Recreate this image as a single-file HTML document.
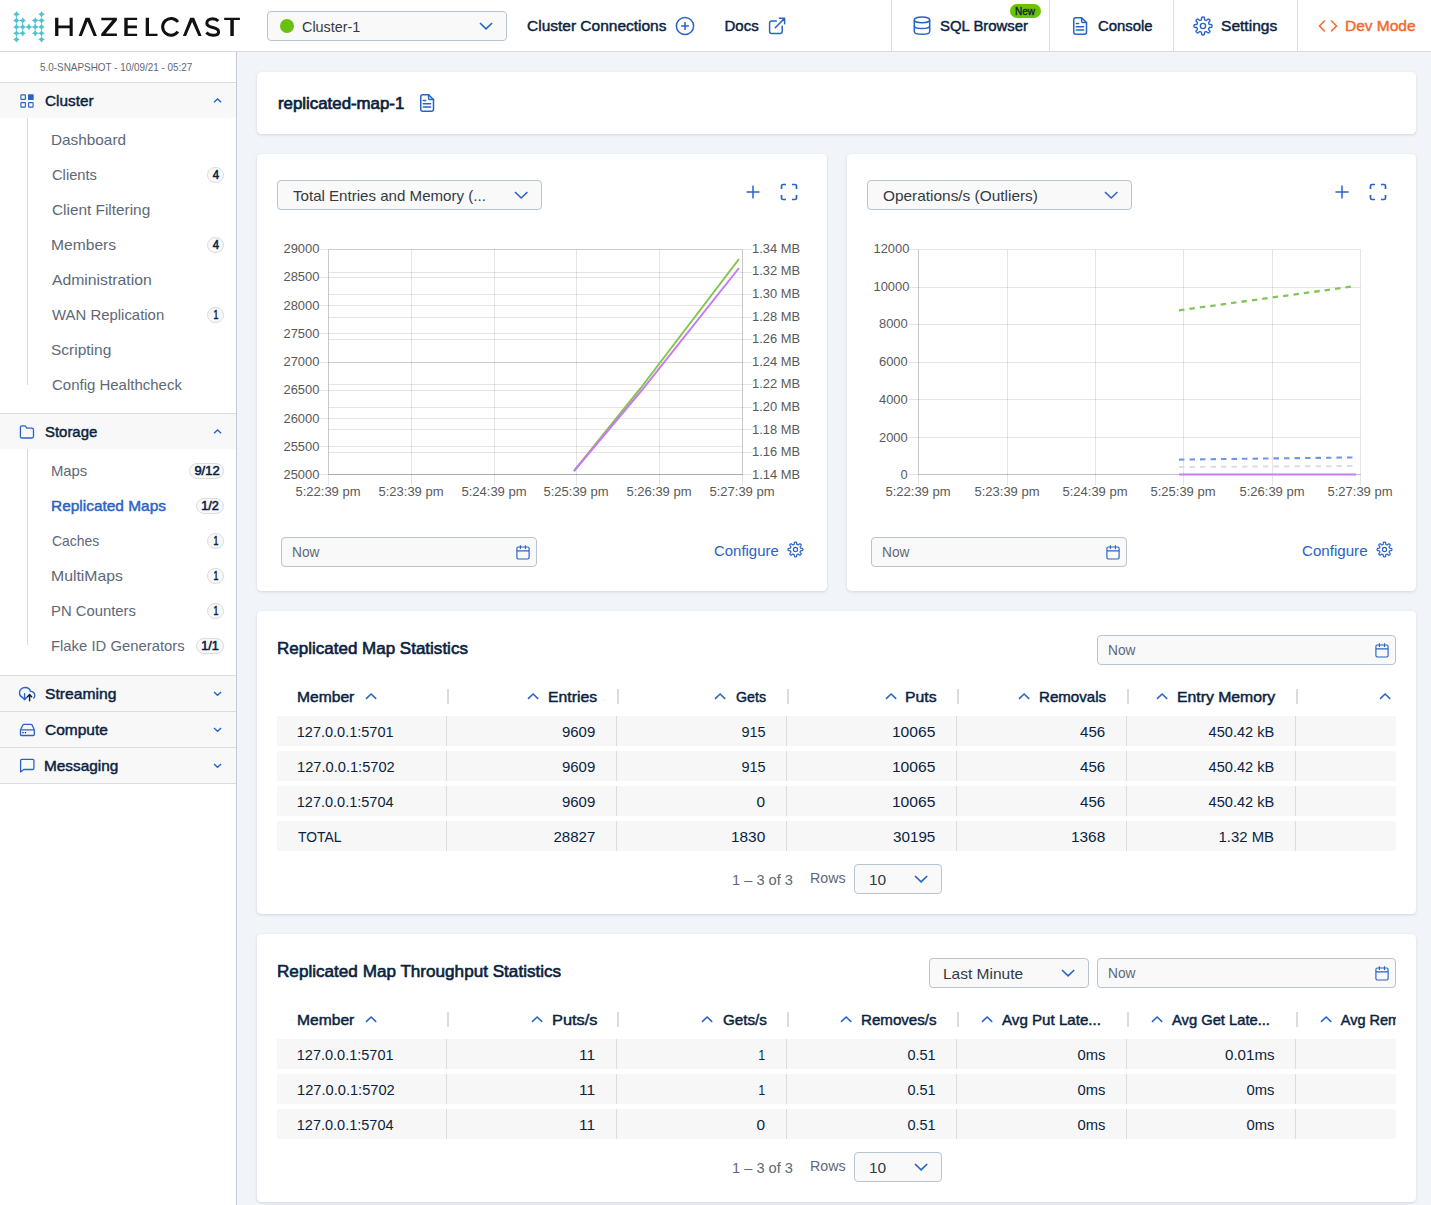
<!DOCTYPE html><html><head><meta charset="utf-8"><style>html,body{margin:0;padding:0;width:1431px;height:1205px;overflow:hidden;background:#fff}.t{position:absolute;white-space:nowrap;font-family:"Liberation Sans",sans-serif}</style></head><body>
<div style="position:absolute;left:0;top:0;width:1431px;height:51px;background:#fff;border-bottom:1px solid #d9d9d9"></div>
<svg style="position:absolute;left:0;top:0" width="250" height="51" viewBox="0 0 250 51"><g stroke="#4fc3cf" stroke-width="0.45" fill="none"><line x1="16.45" y1="14.3" x2="16.45" y2="39.5"/><line x1="41.5" y1="14.3" x2="41.5" y2="39.5"/><line x1="16.45" y1="20.6" x2="22.7" y2="20.6"/><line x1="35.2" y1="20.6" x2="41.5" y2="20.6"/><line x1="16.45" y1="26.9" x2="22.7" y2="26.9"/><line x1="35.2" y1="26.9" x2="41.5" y2="26.9"/><line x1="16.45" y1="33.2" x2="22.7" y2="33.2"/><line x1="35.2" y1="33.2" x2="41.5" y2="33.2"/><line x1="22.7" y1="20.6" x2="22.7" y2="33.2"/><line x1="35.2" y1="20.6" x2="35.2" y2="33.2"/><line x1="22.7" y1="26.9" x2="35.2" y2="26.9"/></g><g fill="#4fc3cf"><path d="M16.45,11.0 Q17.2,13.55 19.75,14.3 Q17.2,15.05 16.45,17.6 Q15.7,15.05 13.149999999999999,14.3 Q15.7,13.55 16.45,11.0Z"/><path d="M41.5,11.0 Q42.25,13.55 44.8,14.3 Q42.25,15.05 41.5,17.6 Q40.75,15.05 38.2,14.3 Q40.75,13.55 41.5,11.0Z"/><path d="M16.45,17.3 Q17.2,19.85 19.75,20.6 Q17.2,21.35 16.45,23.900000000000002 Q15.7,21.35 13.149999999999999,20.6 Q15.7,19.85 16.45,17.3Z"/><path d="M22.7,17.3 Q23.45,19.85 26.0,20.6 Q23.45,21.35 22.7,23.900000000000002 Q21.95,21.35 19.4,20.6 Q21.95,19.85 22.7,17.3Z"/><path d="M35.2,17.3 Q35.95,19.85 38.5,20.6 Q35.95,21.35 35.2,23.900000000000002 Q34.45,21.35 31.900000000000002,20.6 Q34.45,19.85 35.2,17.3Z"/><path d="M41.5,17.3 Q42.25,19.85 44.8,20.6 Q42.25,21.35 41.5,23.900000000000002 Q40.75,21.35 38.2,20.6 Q40.75,19.85 41.5,17.3Z"/><path d="M16.45,23.599999999999998 Q17.2,26.15 19.75,26.9 Q17.2,27.65 16.45,30.2 Q15.7,27.65 13.149999999999999,26.9 Q15.7,26.15 16.45,23.599999999999998Z"/><path d="M22.7,23.599999999999998 Q23.45,26.15 26.0,26.9 Q23.45,27.65 22.7,30.2 Q21.95,27.65 19.4,26.9 Q21.95,26.15 22.7,23.599999999999998Z"/><path d="M28.9,23.599999999999998 Q29.65,26.15 32.199999999999996,26.9 Q29.65,27.65 28.9,30.2 Q28.15,27.65 25.599999999999998,26.9 Q28.15,26.15 28.9,23.599999999999998Z"/><path d="M35.2,23.599999999999998 Q35.95,26.15 38.5,26.9 Q35.95,27.65 35.2,30.2 Q34.45,27.65 31.900000000000002,26.9 Q34.45,26.15 35.2,23.599999999999998Z"/><path d="M41.5,23.599999999999998 Q42.25,26.15 44.8,26.9 Q42.25,27.65 41.5,30.2 Q40.75,27.65 38.2,26.9 Q40.75,26.15 41.5,23.599999999999998Z"/><path d="M16.45,29.900000000000002 Q17.2,32.45 19.75,33.2 Q17.2,33.95 16.45,36.5 Q15.7,33.95 13.149999999999999,33.2 Q15.7,32.45 16.45,29.900000000000002Z"/><path d="M22.7,29.900000000000002 Q23.45,32.45 26.0,33.2 Q23.45,33.95 22.7,36.5 Q21.95,33.95 19.4,33.2 Q21.95,32.45 22.7,29.900000000000002Z"/><path d="M35.2,29.900000000000002 Q35.95,32.45 38.5,33.2 Q35.95,33.95 35.2,36.5 Q34.45,33.95 31.900000000000002,33.2 Q34.45,32.45 35.2,29.900000000000002Z"/><path d="M41.5,29.900000000000002 Q42.25,32.45 44.8,33.2 Q42.25,33.95 41.5,36.5 Q40.75,33.95 38.2,33.2 Q40.75,32.45 41.5,29.900000000000002Z"/><path d="M16.45,36.2 Q17.2,38.75 19.75,39.5 Q17.2,40.25 16.45,42.8 Q15.7,40.25 13.149999999999999,39.5 Q15.7,38.75 16.45,36.2Z"/><path d="M41.5,36.2 Q42.25,38.75 44.8,39.5 Q42.25,40.25 41.5,42.8 Q40.75,40.25 38.2,39.5 Q40.75,38.75 41.5,36.2Z"/></g><g fill="#111"><path d="M55.1,17.8 H58.4 V25.5 H69.6 V17.8 H72.7 V36.0 H69.6 V28.3 H58.4 V36.0 H55.1 Z"/><path d="M78.6,36.0 L85.6,17.8 H89.6 L96.9,36.0 H93.7 L87.6,21.6 L81.8,36.0 Z"/><path d="M101.3,17.8 H116.9 V20.2 L105.7,33.6 H116.9 V36.0 H101.2 V33.7 L112.4,20.2 H101.3 Z"/><path d="M124.3,17.8 H137.1 V20.1 H127.7 V25.6 H136.9 V28.2 H127.7 V33.7 H137.1 V36.0 H124.3 Z"/><path d="M145.7,17.8 H149.0 V33.7 H157.5 V36.0 H145.7 Z"/><path d="M182.9,36.0 L190.2,17.8 H194.1 L201.6,36.0 H198.4 L192.1,21.8 L186.1,36.0 Z"/><path d="M224.2,17.8 H239.9 V20.1 H233.8 V36.0 H230.3 V20.1 H224.2 Z"/></g><g stroke="#111" stroke-width="3.0" fill="none"><path d="M177.9,22.0 A8.4,8.4 0 1 0 177.9,31.7"/><path d="M218.3,21.0 C216.8,19.5 214.8,18.8 212.6,18.8 C209.3,18.8 206.8,20.6 206.8,23.2 C206.8,26.0 209.6,26.8 212.8,27.5 C216.3,28.2 218.6,29.4 218.6,31.9 C218.6,34.0 216.2,35.3 212.8,35.3 C210.3,35.3 208.0,34.2 206.3,32.6"/></g></svg>
<div style="position:absolute;left:267px;top:11px;width:238px;height:28px;border:1px solid #b8c3d0;border-radius:4px;background:#f9f9f9"></div>
<div style="position:absolute;left:280px;top:19px;width:14px;height:14px;border-radius:50%;background:#66c20e"></div>
<svg style="position:absolute;left:478px;top:20.9px" width="16.1" height="9.8"><path d="M2,2 L8.05,7.8 L14.1,2" fill="none" stroke="#2863c8" stroke-width="1.6"/></svg>
<svg style="position:absolute;left:674px;top:15px" width="22" height="22"><circle cx="11" cy="11" r="8.6" fill="none" stroke="#2863c8" stroke-width="1.5"/><path d="M11,7.1 V14.9 M7.1,11 H14.9" stroke="#2863c8" stroke-width="1.5"/></svg>
<svg style="position:absolute;left:767px;top:16px" width="21" height="20"><path d="M9.4,4.9 H4.6 Q2.6,4.9 2.6,6.9 V15.4 Q2.6,17.4 4.6,17.4 H13.2 Q15.2,17.4 15.2,15.4 V10.3" fill="none" stroke="#2863c8" stroke-width="1.5" stroke-linecap="round"/><path d="M8.3,11.7 L17.5,2.4 M12.3,2.3 H17.6 V7.7" fill="none" stroke="#2863c8" stroke-width="1.5" stroke-linecap="round" stroke-linejoin="round"/></svg>
<div style="position:absolute;left:891px;top:0;width:1px;height:51px;background:#dedede"></div>
<div style="position:absolute;left:1049px;top:0;width:1px;height:51px;background:#dedede"></div>
<div style="position:absolute;left:1173px;top:0;width:1px;height:51px;background:#dedede"></div>
<div style="position:absolute;left:1297px;top:0;width:1px;height:51px;background:#dedede"></div>
<svg style="position:absolute;left:912px;top:16px" width="20" height="20"><g fill="none" stroke="#2863c8" stroke-width="1.5"><ellipse cx="10" cy="3.9" rx="7.7" ry="2.8"/><path d="M2.3,3.9 V15.5 C2.3,17.2 5.7,18.3 10,18.3 C14.3,18.3 17.7,17.2 17.7,15.5 V3.9"/><path d="M2.3,9.8 C2.3,11.5 5.7,12.6 10,12.6 C14.3,12.6 17.7,11.5 17.7,9.8"/></g></svg>
<div style="position:absolute;left:1010px;top:4px;width:31px;height:13.8px;border-radius:7px;background:#6bc403"></div>
<svg style="position:absolute;left:1073px;top:17px;overflow:visible" width="15" height="18"><g fill="none" stroke="#2863c8" stroke-width="1.5" stroke-linecap="round" stroke-linejoin="round"><path d="M8.6,0.75 H2.75 Q0.75,0.75 0.75,2.75 V15.2 Q0.75,17.2 2.75,17.2 H11.5 Q13.5,17.2 13.5,15.2 V5.6 Z"/><path d="M8.6,0.75 V4.6 Q8.6,5.6 9.6,5.6 H13.5"/><path d="M3.3,6.5 H5.6 M3.3,9.8 H10.6 M3.3,13.1 H10.6"/></g></svg>
<svg style="position:absolute;left:1193px;top:16px" width="20" height="20"><path d="M10.00,1.01 L10.24,1.02 L10.47,1.04 L10.70,1.07 L10.93,1.14 L11.15,1.28 L11.33,1.63 L11.43,2.28 L11.48,3.05 L11.55,3.55 L11.66,3.79 L11.80,3.91 L11.95,3.99 L12.11,4.05 L12.26,4.11 L12.41,4.17 L12.57,4.24 L12.72,4.30 L12.87,4.37 L13.03,4.42 L13.21,4.44 L13.46,4.35 L13.87,4.04 L14.45,3.53 L14.98,3.14 L15.35,3.03 L15.61,3.07 L15.82,3.19 L16.01,3.33 L16.18,3.48 L16.35,3.65 L16.52,3.82 L16.67,3.99 L16.81,4.18 L16.93,4.39 L16.97,4.65 L16.86,5.02 L16.47,5.55 L15.96,6.13 L15.65,6.54 L15.56,6.79 L15.58,6.97 L15.63,7.13 L15.70,7.28 L15.76,7.43 L15.83,7.59 L15.89,7.74 L15.95,7.89 L16.01,8.05 L16.09,8.20 L16.21,8.34 L16.45,8.45 L16.95,8.52 L17.72,8.57 L18.37,8.67 L18.72,8.85 L18.86,9.07 L18.93,9.30 L18.96,9.53 L18.98,9.76 L18.99,10.00 L18.98,10.24 L18.96,10.47 L18.93,10.70 L18.86,10.93 L18.72,11.15 L18.37,11.33 L17.72,11.43 L16.95,11.48 L16.45,11.55 L16.21,11.66 L16.09,11.80 L16.01,11.95 L15.95,12.11 L15.89,12.26 L15.83,12.41 L15.76,12.57 L15.70,12.72 L15.63,12.87 L15.58,13.03 L15.56,13.21 L15.65,13.46 L15.96,13.87 L16.47,14.45 L16.86,14.98 L16.97,15.35 L16.93,15.61 L16.81,15.82 L16.67,16.01 L16.52,16.18 L16.35,16.35 L16.18,16.52 L16.01,16.67 L15.82,16.81 L15.61,16.93 L15.35,16.97 L14.98,16.86 L14.45,16.47 L13.87,15.96 L13.46,15.65 L13.21,15.56 L13.03,15.58 L12.87,15.63 L12.72,15.70 L12.57,15.76 L12.41,15.83 L12.26,15.89 L12.11,15.95 L11.95,16.01 L11.80,16.09 L11.66,16.21 L11.55,16.45 L11.48,16.95 L11.43,17.72 L11.33,18.37 L11.15,18.72 L10.93,18.86 L10.70,18.93 L10.47,18.96 L10.24,18.98 L10.00,18.99 L9.76,18.98 L9.53,18.96 L9.30,18.93 L9.07,18.86 L8.85,18.72 L8.67,18.37 L8.57,17.72 L8.52,16.95 L8.45,16.45 L8.34,16.21 L8.20,16.09 L8.05,16.01 L7.89,15.95 L7.74,15.89 L7.59,15.83 L7.43,15.76 L7.28,15.70 L7.13,15.63 L6.97,15.58 L6.79,15.56 L6.54,15.65 L6.13,15.96 L5.55,16.47 L5.02,16.86 L4.65,16.97 L4.39,16.93 L4.18,16.81 L3.99,16.67 L3.82,16.52 L3.65,16.35 L3.48,16.18 L3.33,16.01 L3.19,15.82 L3.07,15.61 L3.03,15.35 L3.14,14.98 L3.53,14.45 L4.04,13.87 L4.35,13.46 L4.44,13.21 L4.42,13.03 L4.37,12.87 L4.30,12.72 L4.24,12.57 L4.17,12.41 L4.11,12.26 L4.05,12.11 L3.99,11.95 L3.91,11.80 L3.79,11.66 L3.55,11.55 L3.05,11.48 L2.28,11.43 L1.63,11.33 L1.28,11.15 L1.14,10.93 L1.07,10.70 L1.04,10.47 L1.02,10.24 L1.01,10.00 L1.02,9.76 L1.04,9.53 L1.07,9.30 L1.14,9.07 L1.28,8.85 L1.63,8.67 L2.28,8.57 L3.05,8.52 L3.55,8.45 L3.79,8.34 L3.91,8.20 L3.99,8.05 L4.05,7.89 L4.11,7.74 L4.17,7.59 L4.24,7.43 L4.30,7.28 L4.37,7.13 L4.42,6.97 L4.44,6.79 L4.35,6.54 L4.04,6.13 L3.53,5.55 L3.14,5.02 L3.03,4.65 L3.07,4.39 L3.19,4.18 L3.33,3.99 L3.48,3.82 L3.65,3.65 L3.82,3.48 L3.99,3.33 L4.18,3.19 L4.39,3.07 L4.65,3.03 L5.02,3.14 L5.55,3.53 L6.13,4.04 L6.54,4.35 L6.79,4.44 L6.97,4.42 L7.13,4.37 L7.28,4.30 L7.43,4.24 L7.59,4.17 L7.74,4.11 L7.89,4.05 L8.05,3.99 L8.20,3.91 L8.34,3.79 L8.45,3.55 L8.52,3.05 L8.57,2.28 L8.67,1.63 L8.85,1.28 L9.07,1.14 L9.30,1.07 L9.53,1.04 L9.76,1.02Z" fill="none" stroke="#2863c8" stroke-width="1.4" stroke-linejoin="round"/><circle cx="10.0" cy="10.0" r="2.6" fill="none" stroke="#2863c8" stroke-width="1.4"/></svg>
<svg style="position:absolute;left:1317px;top:17px" width="22" height="18"><path d="M7.8,3.5 L2.4,9 L7.8,14.4 M14.1,3.5 L19.5,9 L14.1,14.4" fill="none" stroke="#f26d2c" stroke-width="1.5"/></svg>
<div style="position:absolute;left:0;top:52px;width:236px;height:1153px;background:#fff;border-right:1px solid #c3cad4"></div>
<div style="position:absolute;left:0;top:82px;width:236px;height:1px;background:#dcdcdc"></div>
<div style="position:absolute;left:0;top:83px;width:236px;height:35px;background:#f8f8f8"></div>
<svg style="position:absolute;left:19px;top:93px" width="16" height="16"><g fill="none" stroke="#2863c8" stroke-width="1.15"><rect x="1.9" y="1.9" width="4.5" height="4.5" rx="0.6"/><rect x="1.9" y="9.6" width="4.5" height="4.5" rx="0.6"/><rect x="9.6" y="9.6" width="4.5" height="4.5" rx="0.6"/></g><rect x="9.0" y="1.3" width="5.7" height="5.7" rx="0.6" fill="#2863c8"/></svg>
<svg style="position:absolute;left:212.4px;top:97.3px" width="11.1" height="7.3"><path d="M2,5.3 L5.55,2 L9.1,5.3" fill="none" stroke="#2863c8" stroke-width="1.4"/></svg>
<div style="position:absolute;left:0;top:413px;width:236px;height:1px;background:#dcdcdc"></div>
<div style="position:absolute;left:0;top:414px;width:236px;height:35px;background:#f8f8f8"></div>
<svg style="position:absolute;left:19px;top:424px" width="17" height="16"><path d="M1.4,3.6 Q1.4,1.9 3.1,1.9 H5.6 Q6.4,1.9 6.8,2.6 L7.5,3.6 Q7.9,4.2 8.6,4.2 H12.8 Q14.5,4.2 14.5,5.9 V12.3 Q14.5,14.0 12.8,14.0 H3.1 Q1.4,14.0 1.4,12.3 Z" fill="none" stroke="#2863c8" stroke-width="1.3"/></svg>
<svg style="position:absolute;left:212.4px;top:428.3px" width="11.1" height="7.3"><path d="M2,5.3 L5.55,2 L9.1,5.3" fill="none" stroke="#2863c8" stroke-width="1.4"/></svg>
<div style="position:absolute;left:0;top:675px;width:236px;height:1px;background:#dcdcdc"></div>
<div style="position:absolute;left:0;top:676px;width:236px;height:35px;background:#f8f8f8"></div>
<svg style="position:absolute;left:18px;top:685px" width="19" height="18"><path d="M4.4,12.4 C2.6,11.6 1.5,9.9 1.5,7.9 C1.5,4.8 4,2.5 7.2,2.5 C9.6,2.5 11.7,4 12.5,6.2 C14.9,6.3 16.8,8.2 16.8,10.5 C16.8,11.5 16.4,12.4 15.7,13.1" fill="none" stroke="#2863c8" stroke-width="1.4" stroke-linecap="round"/><path d="M6.6,8.6 V14.8 M4.5,12.6 L6.6,14.8 L8.7,12.6" fill="none" stroke="#2863c8" stroke-width="1.4" stroke-linecap="round" stroke-linejoin="round"/><path d="M11.6,15.8 V9.6 M9.5,11.8 L11.6,9.6 L13.7,11.8" fill="none" stroke="#0b1f3f" stroke-width="1.4" stroke-linecap="round" stroke-linejoin="round"/></svg>
<svg style="position:absolute;left:212.4px;top:690.4px" width="11.1" height="7.3"><path d="M2,2 L5.55,5.3 L9.1,2" fill="none" stroke="#2863c8" stroke-width="1.4"/></svg>
<div style="position:absolute;left:0;top:711px;width:236px;height:1px;background:#dcdcdc"></div>
<div style="position:absolute;left:0;top:712px;width:236px;height:35px;background:#f8f8f8"></div>
<svg style="position:absolute;left:19px;top:722px" width="17" height="16"><path d="M1.5,8 L3.7,3.3 Q4.2,2.4 5.2,2.4 H11.8 Q12.8,2.4 13.3,3.3 L15.3,8 V12.4 Q15.3,13.5 14.2,13.5 H2.6 Q1.5,13.5 1.5,12.4 Z M1.5,7.9 H15.3" fill="none" stroke="#2863c8" stroke-width="1.3" stroke-linejoin="round"/><path d="M3.3,10.6 H4.6 M5.8,10.6 H7.1" stroke="#0b1f3f" stroke-width="1.1"/></svg>
<svg style="position:absolute;left:212.4px;top:726.4px" width="11.1" height="7.3"><path d="M2,2 L5.55,5.3 L9.1,2" fill="none" stroke="#2863c8" stroke-width="1.4"/></svg>
<div style="position:absolute;left:0;top:747px;width:236px;height:1px;background:#dcdcdc"></div>
<div style="position:absolute;left:0;top:748px;width:236px;height:35px;background:#f8f8f8"></div>
<svg style="position:absolute;left:19px;top:758px" width="17" height="16"><path d="M4.8,11.5 H13.6 Q14.9,11.5 14.9,10.2 V2.6 Q14.9,1.3 13.6,1.3 H2.9 Q1.6,1.3 1.6,2.6 V13.9 Z" fill="none" stroke="#2863c8" stroke-width="1.3" stroke-linejoin="round"/></svg>
<svg style="position:absolute;left:212.4px;top:762.4px" width="11.1" height="7.3"><path d="M2,2 L5.55,5.3 L9.1,2" fill="none" stroke="#2863c8" stroke-width="1.4"/></svg>
<div style="position:absolute;left:0;top:783px;width:236px;height:1px;background:#dcdcdc"></div>
<div style="position:absolute;left:27px;top:118px;width:1px;height:267px;background:#d9d9d9"></div>
<div style="position:absolute;left:27px;top:449px;width:1px;height:196px;background:#d9d9d9"></div>
<div style="position:absolute;left:207px;top:167.0px;width:15px;height:14px;border:1px solid #dddddd;border-radius:9px;background:#f8f8f8"></div>
<div style="position:absolute;left:207px;top:237.0px;width:15px;height:14px;border:1px solid #dddddd;border-radius:9px;background:#f8f8f8"></div>
<div style="position:absolute;left:207px;top:307.0px;width:15px;height:14px;border:1px solid #dddddd;border-radius:9px;background:#f8f8f8"></div>
<div style="position:absolute;left:189px;top:463.0px;width:33px;height:14px;border:1px solid #dddddd;border-radius:9px;background:#f8f8f8"></div>
<div style="position:absolute;left:196px;top:498.0px;width:26px;height:14px;border:1px solid #dddddd;border-radius:9px;background:#f8f8f8"></div>
<div style="position:absolute;left:207px;top:533.0px;width:15px;height:14px;border:1px solid #dddddd;border-radius:9px;background:#f8f8f8"></div>
<div style="position:absolute;left:207px;top:568.0px;width:15px;height:14px;border:1px solid #dddddd;border-radius:9px;background:#f8f8f8"></div>
<div style="position:absolute;left:207px;top:603.0px;width:15px;height:14px;border:1px solid #dddddd;border-radius:9px;background:#f8f8f8"></div>
<div style="position:absolute;left:196px;top:638.0px;width:26px;height:14px;border:1px solid #dddddd;border-radius:9px;background:#f8f8f8"></div>
<div style="position:absolute;left:237px;top:52px;width:1194px;height:1153px;background:#f1f4f8"></div>
<div style="position:absolute;left:257px;top:72px;width:1159px;height:62px;background:#fff;border-radius:4.5px;box-shadow:0 1px 3px rgba(40,50,80,0.15)"></div>
<svg style="position:absolute;left:420px;top:94px;overflow:visible" width="15" height="18"><g fill="none" stroke="#2863c8" stroke-width="1.5" stroke-linecap="round" stroke-linejoin="round"><path d="M8.6,0.75 H2.75 Q0.75,0.75 0.75,2.75 V15.2 Q0.75,17.2 2.75,17.2 H11.5 Q13.5,17.2 13.5,15.2 V5.6 Z"/><path d="M8.6,0.75 V4.6 Q8.6,5.6 9.6,5.6 H13.5"/><path d="M3.3,6.5 H5.6 M3.3,9.8 H10.6 M3.3,13.1 H10.6"/></g></svg>
<div style="position:absolute;left:257px;top:154px;width:570px;height:437px;background:#fff;border-radius:4.5px;box-shadow:0 1px 3px rgba(40,50,80,0.15)"></div>
<div style="position:absolute;left:847px;top:154px;width:569px;height:437px;background:#fff;border-radius:4.5px;box-shadow:0 1px 3px rgba(40,50,80,0.15)"></div>
<div style="position:absolute;left:257px;top:611px;width:1159px;height:303px;background:#fff;border-radius:4.5px;box-shadow:0 1px 3px rgba(40,50,80,0.15)"></div>
<div style="position:absolute;left:257px;top:934px;width:1159px;height:268px;background:#fff;border-radius:4.5px;box-shadow:0 1px 3px rgba(40,50,80,0.15)"></div>
<div style="position:absolute;left:277px;top:180px;width:263px;height:28px;border:1px solid #b8c3d0;border-radius:4px;background:#f9f9f9"></div>
<svg style="position:absolute;left:512.8px;top:189.9px" width="16.4" height="10.0"><path d="M2,2 L8.2,8.0 L14.4,2" fill="none" stroke="#2863c8" stroke-width="1.6"/></svg>
<svg style="position:absolute;left:745px;top:184px" width="16" height="16"><path d="M8,1.5 V14.5 M1.5,8 H14.5" stroke="#2863c8" stroke-width="1.5"/></svg>
<svg style="position:absolute;left:780px;top:183px" width="18" height="18"><path d="M1.5,6 V3 Q1.5,1.5 3,1.5 H6 M12,1.5 H15 Q16.5,1.5 16.5,3 V6 M16.5,12 V15 Q16.5,16.5 15,16.5 H12 M6,16.5 H3 Q1.5,16.5 1.5,15 V12" fill="none" stroke="#2863c8" stroke-width="1.7"/></svg>
<div style="position:absolute;left:867px;top:180px;width:263px;height:28px;border:1px solid #b8c3d0;border-radius:4px;background:#f9f9f9"></div>
<svg style="position:absolute;left:1102.8px;top:189.9px" width="16.4" height="10.0"><path d="M2,2 L8.2,8.0 L14.4,2" fill="none" stroke="#2863c8" stroke-width="1.6"/></svg>
<svg style="position:absolute;left:1334px;top:184px" width="16" height="16"><path d="M8,1.5 V14.5 M1.5,8 H14.5" stroke="#2863c8" stroke-width="1.5"/></svg>
<svg style="position:absolute;left:1369px;top:183px" width="18" height="18"><path d="M1.5,6 V3 Q1.5,1.5 3,1.5 H6 M12,1.5 H15 Q16.5,1.5 16.5,3 V6 M16.5,12 V15 Q16.5,16.5 15,16.5 H12 M6,16.5 H3 Q1.5,16.5 1.5,15 V12" fill="none" stroke="#2863c8" stroke-width="1.7"/></svg>
<div style="position:absolute;left:281px;top:537px;width:254px;height:28px;border:1px solid #b8c3d0;border-radius:4px;background:#f9f9f9"></div>
<svg style="position:absolute;left:516px;top:544.5px" width="15" height="15"><g fill="none" stroke="#2863c8" stroke-width="1.15"><rect x="0.9" y="2.0" width="12.2" height="12.0" rx="1.4"/><path d="M0.9,5.9 H13.1 M4.4,0.2 V4.0 M9.5,0.2 V4.0"/></g></svg>
<div style="position:absolute;left:871px;top:537px;width:254px;height:28px;border:1px solid #b8c3d0;border-radius:4px;background:#f9f9f9"></div>
<svg style="position:absolute;left:1106px;top:544.5px" width="15" height="15"><g fill="none" stroke="#2863c8" stroke-width="1.15"><rect x="0.9" y="2.0" width="12.2" height="12.0" rx="1.4"/><path d="M0.9,5.9 H13.1 M4.4,0.2 V4.0 M9.5,0.2 V4.0"/></g></svg>
<svg style="position:absolute;left:786.75px;top:541.25px" width="17" height="17"><path d="M8.50,1.11 L8.69,1.12 L8.89,1.13 L9.08,1.16 L9.27,1.21 L9.44,1.33 L9.59,1.61 L9.68,2.14 L9.72,2.77 L9.78,3.18 L9.87,3.38 L9.99,3.47 L10.11,3.54 L10.24,3.59 L10.37,3.64 L10.49,3.69 L10.62,3.74 L10.74,3.80 L10.87,3.85 L11.00,3.89 L11.15,3.91 L11.36,3.84 L11.69,3.59 L12.16,3.17 L12.60,2.86 L12.90,2.76 L13.11,2.80 L13.28,2.90 L13.44,3.01 L13.58,3.14 L13.72,3.28 L13.86,3.42 L13.99,3.56 L14.10,3.72 L14.20,3.89 L14.24,4.10 L14.14,4.40 L13.83,4.84 L13.41,5.31 L13.16,5.64 L13.09,5.85 L13.11,6.00 L13.15,6.13 L13.20,6.26 L13.26,6.38 L13.31,6.51 L13.36,6.63 L13.41,6.76 L13.46,6.89 L13.53,7.01 L13.62,7.13 L13.82,7.22 L14.23,7.28 L14.86,7.32 L15.39,7.41 L15.67,7.56 L15.79,7.73 L15.84,7.92 L15.87,8.11 L15.88,8.31 L15.89,8.50 L15.88,8.69 L15.87,8.89 L15.84,9.08 L15.79,9.27 L15.67,9.44 L15.39,9.59 L14.86,9.68 L14.23,9.72 L13.82,9.78 L13.62,9.87 L13.53,9.99 L13.46,10.11 L13.41,10.24 L13.36,10.37 L13.31,10.49 L13.26,10.62 L13.20,10.74 L13.15,10.87 L13.11,11.00 L13.09,11.15 L13.16,11.36 L13.41,11.69 L13.83,12.16 L14.14,12.60 L14.24,12.90 L14.20,13.11 L14.10,13.28 L13.99,13.44 L13.86,13.58 L13.72,13.72 L13.58,13.86 L13.44,13.99 L13.28,14.10 L13.11,14.20 L12.90,14.24 L12.60,14.14 L12.16,13.83 L11.69,13.41 L11.36,13.16 L11.15,13.09 L11.00,13.11 L10.87,13.15 L10.74,13.20 L10.62,13.26 L10.49,13.31 L10.37,13.36 L10.24,13.41 L10.11,13.46 L9.99,13.53 L9.87,13.62 L9.78,13.82 L9.72,14.23 L9.68,14.86 L9.59,15.39 L9.44,15.67 L9.27,15.79 L9.08,15.84 L8.89,15.87 L8.69,15.88 L8.50,15.89 L8.31,15.88 L8.11,15.87 L7.92,15.84 L7.73,15.79 L7.56,15.67 L7.41,15.39 L7.32,14.86 L7.28,14.23 L7.22,13.82 L7.13,13.62 L7.01,13.53 L6.89,13.46 L6.76,13.41 L6.63,13.36 L6.51,13.31 L6.38,13.26 L6.26,13.20 L6.13,13.15 L6.00,13.11 L5.85,13.09 L5.64,13.16 L5.31,13.41 L4.84,13.83 L4.40,14.14 L4.10,14.24 L3.89,14.20 L3.72,14.10 L3.56,13.99 L3.42,13.86 L3.28,13.72 L3.14,13.58 L3.01,13.44 L2.90,13.28 L2.80,13.11 L2.76,12.90 L2.86,12.60 L3.17,12.16 L3.59,11.69 L3.84,11.36 L3.91,11.15 L3.89,11.00 L3.85,10.87 L3.80,10.74 L3.74,10.62 L3.69,10.49 L3.64,10.37 L3.59,10.24 L3.54,10.11 L3.47,9.99 L3.38,9.87 L3.18,9.78 L2.77,9.72 L2.14,9.68 L1.61,9.59 L1.33,9.44 L1.21,9.27 L1.16,9.08 L1.13,8.89 L1.12,8.69 L1.11,8.50 L1.12,8.31 L1.13,8.11 L1.16,7.92 L1.21,7.73 L1.33,7.56 L1.61,7.41 L2.14,7.32 L2.77,7.28 L3.18,7.22 L3.38,7.13 L3.47,7.01 L3.54,6.89 L3.59,6.76 L3.64,6.63 L3.69,6.51 L3.74,6.38 L3.80,6.26 L3.85,6.13 L3.89,6.00 L3.91,5.85 L3.84,5.64 L3.59,5.31 L3.17,4.84 L2.86,4.40 L2.76,4.10 L2.80,3.89 L2.90,3.72 L3.01,3.56 L3.14,3.42 L3.28,3.28 L3.42,3.14 L3.56,3.01 L3.72,2.90 L3.89,2.80 L4.10,2.76 L4.40,2.86 L4.84,3.17 L5.31,3.59 L5.64,3.84 L5.85,3.91 L6.00,3.89 L6.13,3.85 L6.26,3.80 L6.38,3.74 L6.51,3.69 L6.63,3.64 L6.76,3.59 L6.89,3.54 L7.01,3.47 L7.13,3.38 L7.22,3.18 L7.28,2.77 L7.32,2.14 L7.41,1.61 L7.56,1.33 L7.73,1.21 L7.92,1.16 L8.11,1.13 L8.31,1.12Z" fill="none" stroke="#2863c8" stroke-width="1.2" stroke-linejoin="round"/><circle cx="8.5" cy="8.5" r="2.1" fill="none" stroke="#2863c8" stroke-width="1.2"/></svg>
<svg style="position:absolute;left:1375.75px;top:541.25px" width="17" height="17"><path d="M8.50,1.11 L8.69,1.12 L8.89,1.13 L9.08,1.16 L9.27,1.21 L9.44,1.33 L9.59,1.61 L9.68,2.14 L9.72,2.77 L9.78,3.18 L9.87,3.38 L9.99,3.47 L10.11,3.54 L10.24,3.59 L10.37,3.64 L10.49,3.69 L10.62,3.74 L10.74,3.80 L10.87,3.85 L11.00,3.89 L11.15,3.91 L11.36,3.84 L11.69,3.59 L12.16,3.17 L12.60,2.86 L12.90,2.76 L13.11,2.80 L13.28,2.90 L13.44,3.01 L13.58,3.14 L13.72,3.28 L13.86,3.42 L13.99,3.56 L14.10,3.72 L14.20,3.89 L14.24,4.10 L14.14,4.40 L13.83,4.84 L13.41,5.31 L13.16,5.64 L13.09,5.85 L13.11,6.00 L13.15,6.13 L13.20,6.26 L13.26,6.38 L13.31,6.51 L13.36,6.63 L13.41,6.76 L13.46,6.89 L13.53,7.01 L13.62,7.13 L13.82,7.22 L14.23,7.28 L14.86,7.32 L15.39,7.41 L15.67,7.56 L15.79,7.73 L15.84,7.92 L15.87,8.11 L15.88,8.31 L15.89,8.50 L15.88,8.69 L15.87,8.89 L15.84,9.08 L15.79,9.27 L15.67,9.44 L15.39,9.59 L14.86,9.68 L14.23,9.72 L13.82,9.78 L13.62,9.87 L13.53,9.99 L13.46,10.11 L13.41,10.24 L13.36,10.37 L13.31,10.49 L13.26,10.62 L13.20,10.74 L13.15,10.87 L13.11,11.00 L13.09,11.15 L13.16,11.36 L13.41,11.69 L13.83,12.16 L14.14,12.60 L14.24,12.90 L14.20,13.11 L14.10,13.28 L13.99,13.44 L13.86,13.58 L13.72,13.72 L13.58,13.86 L13.44,13.99 L13.28,14.10 L13.11,14.20 L12.90,14.24 L12.60,14.14 L12.16,13.83 L11.69,13.41 L11.36,13.16 L11.15,13.09 L11.00,13.11 L10.87,13.15 L10.74,13.20 L10.62,13.26 L10.49,13.31 L10.37,13.36 L10.24,13.41 L10.11,13.46 L9.99,13.53 L9.87,13.62 L9.78,13.82 L9.72,14.23 L9.68,14.86 L9.59,15.39 L9.44,15.67 L9.27,15.79 L9.08,15.84 L8.89,15.87 L8.69,15.88 L8.50,15.89 L8.31,15.88 L8.11,15.87 L7.92,15.84 L7.73,15.79 L7.56,15.67 L7.41,15.39 L7.32,14.86 L7.28,14.23 L7.22,13.82 L7.13,13.62 L7.01,13.53 L6.89,13.46 L6.76,13.41 L6.63,13.36 L6.51,13.31 L6.38,13.26 L6.26,13.20 L6.13,13.15 L6.00,13.11 L5.85,13.09 L5.64,13.16 L5.31,13.41 L4.84,13.83 L4.40,14.14 L4.10,14.24 L3.89,14.20 L3.72,14.10 L3.56,13.99 L3.42,13.86 L3.28,13.72 L3.14,13.58 L3.01,13.44 L2.90,13.28 L2.80,13.11 L2.76,12.90 L2.86,12.60 L3.17,12.16 L3.59,11.69 L3.84,11.36 L3.91,11.15 L3.89,11.00 L3.85,10.87 L3.80,10.74 L3.74,10.62 L3.69,10.49 L3.64,10.37 L3.59,10.24 L3.54,10.11 L3.47,9.99 L3.38,9.87 L3.18,9.78 L2.77,9.72 L2.14,9.68 L1.61,9.59 L1.33,9.44 L1.21,9.27 L1.16,9.08 L1.13,8.89 L1.12,8.69 L1.11,8.50 L1.12,8.31 L1.13,8.11 L1.16,7.92 L1.21,7.73 L1.33,7.56 L1.61,7.41 L2.14,7.32 L2.77,7.28 L3.18,7.22 L3.38,7.13 L3.47,7.01 L3.54,6.89 L3.59,6.76 L3.64,6.63 L3.69,6.51 L3.74,6.38 L3.80,6.26 L3.85,6.13 L3.89,6.00 L3.91,5.85 L3.84,5.64 L3.59,5.31 L3.17,4.84 L2.86,4.40 L2.76,4.10 L2.80,3.89 L2.90,3.72 L3.01,3.56 L3.14,3.42 L3.28,3.28 L3.42,3.14 L3.56,3.01 L3.72,2.90 L3.89,2.80 L4.10,2.76 L4.40,2.86 L4.84,3.17 L5.31,3.59 L5.64,3.84 L5.85,3.91 L6.00,3.89 L6.13,3.85 L6.26,3.80 L6.38,3.74 L6.51,3.69 L6.63,3.64 L6.76,3.59 L6.89,3.54 L7.01,3.47 L7.13,3.38 L7.22,3.18 L7.28,2.77 L7.32,2.14 L7.41,1.61 L7.56,1.33 L7.73,1.21 L7.92,1.16 L8.11,1.13 L8.31,1.12Z" fill="none" stroke="#2863c8" stroke-width="1.2" stroke-linejoin="round"/><circle cx="8.5" cy="8.5" r="2.1" fill="none" stroke="#2863c8" stroke-width="1.2"/></svg>
<svg style="position:absolute;left:0;top:0" width="1431" height="1205"><line x1="318.7" y1="249.5" x2="742.4" y2="249.5" stroke="rgba(0,0,0,0.1)" stroke-width="1"/><line x1="318.7" y1="277.5" x2="742.4" y2="277.5" stroke="rgba(0,0,0,0.1)" stroke-width="1"/><line x1="318.7" y1="305.5" x2="742.4" y2="305.5" stroke="rgba(0,0,0,0.1)" stroke-width="1"/><line x1="318.7" y1="333.5" x2="742.4" y2="333.5" stroke="rgba(0,0,0,0.1)" stroke-width="1"/><line x1="318.7" y1="362.5" x2="742.4" y2="362.5" stroke="rgba(0,0,0,0.1)" stroke-width="1"/><line x1="318.7" y1="390.5" x2="742.4" y2="390.5" stroke="rgba(0,0,0,0.1)" stroke-width="1"/><line x1="318.7" y1="418.5" x2="742.4" y2="418.5" stroke="rgba(0,0,0,0.1)" stroke-width="1"/><line x1="318.7" y1="446.5" x2="742.4" y2="446.5" stroke="rgba(0,0,0,0.1)" stroke-width="1"/><line x1="318.7" y1="474.5" x2="742.4" y2="474.5" stroke="rgba(0,0,0,0.1)" stroke-width="1"/><line x1="328.7" y1="249.5" x2="752.4" y2="249.5" stroke="rgba(0,0,0,0.1)" stroke-width="1"/><line x1="328.7" y1="272.5" x2="752.4" y2="272.5" stroke="rgba(0,0,0,0.1)" stroke-width="1"/><line x1="328.7" y1="294.5" x2="752.4" y2="294.5" stroke="rgba(0,0,0,0.1)" stroke-width="1"/><line x1="328.7" y1="317.5" x2="752.4" y2="317.5" stroke="rgba(0,0,0,0.1)" stroke-width="1"/><line x1="328.7" y1="339.5" x2="752.4" y2="339.5" stroke="rgba(0,0,0,0.1)" stroke-width="1"/><line x1="328.7" y1="362.5" x2="752.4" y2="362.5" stroke="rgba(0,0,0,0.1)" stroke-width="1"/><line x1="328.7" y1="384.5" x2="752.4" y2="384.5" stroke="rgba(0,0,0,0.1)" stroke-width="1"/><line x1="328.7" y1="407.5" x2="752.4" y2="407.5" stroke="rgba(0,0,0,0.1)" stroke-width="1"/><line x1="328.7" y1="429.5" x2="752.4" y2="429.5" stroke="rgba(0,0,0,0.1)" stroke-width="1"/><line x1="328.7" y1="452.5" x2="752.4" y2="452.5" stroke="rgba(0,0,0,0.1)" stroke-width="1"/><line x1="328.7" y1="474.5" x2="752.4" y2="474.5" stroke="rgba(0,0,0,0.1)" stroke-width="1"/><line x1="328.5" y1="249.6" x2="328.5" y2="485.6" stroke="rgba(0,0,0,0.1)" stroke-width="1"/><line x1="411.5" y1="249.6" x2="411.5" y2="485.6" stroke="rgba(0,0,0,0.1)" stroke-width="1"/><line x1="494.5" y1="249.6" x2="494.5" y2="485.6" stroke="rgba(0,0,0,0.1)" stroke-width="1"/><line x1="576.5" y1="249.6" x2="576.5" y2="485.6" stroke="rgba(0,0,0,0.1)" stroke-width="1"/><line x1="659.5" y1="249.6" x2="659.5" y2="485.6" stroke="rgba(0,0,0,0.1)" stroke-width="1"/><line x1="742.5" y1="249.6" x2="742.5" y2="485.6" stroke="rgba(0,0,0,0.1)" stroke-width="1"/><line x1="328.5" y1="249.6" x2="328.5" y2="474.6" stroke="rgba(0,0,0,0.12)" stroke-width="1"/><line x1="328.7" y1="474.5" x2="742.4" y2="474.5" stroke="rgba(0,0,0,0.16)" stroke-width="1"/><line x1="742.5" y1="249.6" x2="742.5" y2="474.6" stroke="rgba(0,0,0,0.12)" stroke-width="1"/><polyline points="574,471 640,389 739,259" fill="none" stroke="#80c64a" stroke-width="2"/><polyline points="574,471 642,390 739,268" fill="none" stroke="#c87af2" stroke-width="2"/></svg>
<svg style="position:absolute;left:0;top:0" width="1431" height="1205"><line x1="908.7" y1="249.5" x2="1360.6" y2="249.5" stroke="rgba(0,0,0,0.1)" stroke-width="1"/><line x1="908.7" y1="287.5" x2="1360.6" y2="287.5" stroke="rgba(0,0,0,0.1)" stroke-width="1"/><line x1="908.7" y1="324.5" x2="1360.6" y2="324.5" stroke="rgba(0,0,0,0.1)" stroke-width="1"/><line x1="908.7" y1="362.5" x2="1360.6" y2="362.5" stroke="rgba(0,0,0,0.1)" stroke-width="1"/><line x1="908.7" y1="399.5" x2="1360.6" y2="399.5" stroke="rgba(0,0,0,0.1)" stroke-width="1"/><line x1="908.7" y1="437.5" x2="1360.6" y2="437.5" stroke="rgba(0,0,0,0.1)" stroke-width="1"/><line x1="908.7" y1="474.5" x2="1360.6" y2="474.5" stroke="rgba(0,0,0,0.1)" stroke-width="1"/><line x1="918.5" y1="249.6" x2="918.5" y2="485.6" stroke="rgba(0,0,0,0.1)" stroke-width="1"/><line x1="1007.5" y1="249.6" x2="1007.5" y2="485.6" stroke="rgba(0,0,0,0.1)" stroke-width="1"/><line x1="1095.5" y1="249.6" x2="1095.5" y2="485.6" stroke="rgba(0,0,0,0.1)" stroke-width="1"/><line x1="1183.5" y1="249.6" x2="1183.5" y2="485.6" stroke="rgba(0,0,0,0.1)" stroke-width="1"/><line x1="1272.5" y1="249.6" x2="1272.5" y2="485.6" stroke="rgba(0,0,0,0.1)" stroke-width="1"/><line x1="1360.5" y1="249.6" x2="1360.5" y2="485.6" stroke="rgba(0,0,0,0.1)" stroke-width="1"/><line x1="918.5" y1="249.6" x2="918.5" y2="474.6" stroke="rgba(0,0,0,0.12)" stroke-width="1"/><line x1="918.7" y1="474.5" x2="1360.6" y2="474.5" stroke="rgba(0,0,0,0.16)" stroke-width="1"/><line x1="1179" y1="310.3" x2="1354" y2="286.3" stroke="#84c655" stroke-width="2.3" stroke-dasharray="5.5,5"/><line x1="1179" y1="459.6" x2="1355" y2="457.4" stroke="#7395e8" stroke-width="2.1" stroke-dasharray="5.5,5"/><line x1="1179" y1="467" x2="1355" y2="466" stroke="#dedede" stroke-width="2" stroke-dasharray="5.5,5"/><line x1="1179" y1="474.6" x2="1356" y2="474.6" stroke="#c87af2" stroke-width="2"/></svg>
<div style="position:absolute;left:447px;top:689px;width:2px;height:15px;background:#dcdcdc"></div>
<div style="position:absolute;left:617px;top:689px;width:2px;height:15px;background:#dcdcdc"></div>
<div style="position:absolute;left:787px;top:689px;width:2px;height:15px;background:#dcdcdc"></div>
<div style="position:absolute;left:957px;top:689px;width:2px;height:15px;background:#dcdcdc"></div>
<div style="position:absolute;left:1127px;top:689px;width:2px;height:15px;background:#dcdcdc"></div>
<div style="position:absolute;left:1296px;top:689px;width:2px;height:15px;background:#dcdcdc"></div>
<svg style="position:absolute;left:363.9px;top:691.6px" width="14.2" height="8.9"><path d="M2,6.9 L7.1,2 L12.2,6.9" fill="none" stroke="#2863c8" stroke-width="1.5"/></svg>
<svg style="position:absolute;left:526.1999999999999px;top:691.6px" width="14.2" height="8.9"><path d="M2,6.9 L7.1,2 L12.2,6.9" fill="none" stroke="#2863c8" stroke-width="1.5"/></svg>
<svg style="position:absolute;left:712.9px;top:691.6px" width="14.2" height="8.9"><path d="M2,6.9 L7.1,2 L12.2,6.9" fill="none" stroke="#2863c8" stroke-width="1.5"/></svg>
<svg style="position:absolute;left:884.4px;top:691.6px" width="14.2" height="8.9"><path d="M2,6.9 L7.1,2 L12.2,6.9" fill="none" stroke="#2863c8" stroke-width="1.5"/></svg>
<svg style="position:absolute;left:1017.4px;top:691.6px" width="14.2" height="8.9"><path d="M2,6.9 L7.1,2 L12.2,6.9" fill="none" stroke="#2863c8" stroke-width="1.5"/></svg>
<svg style="position:absolute;left:1155.4px;top:691.6px" width="14.2" height="8.9"><path d="M2,6.9 L7.1,2 L12.2,6.9" fill="none" stroke="#2863c8" stroke-width="1.5"/></svg>
<svg style="position:absolute;left:1377.9px;top:691.6px" width="14.2" height="8.9"><path d="M2,6.9 L7.1,2 L12.2,6.9" fill="none" stroke="#2863c8" stroke-width="1.5"/></svg>
<div style="position:absolute;left:277px;top:716px;width:1119px;height:30px;background:#f7f7f7"></div>
<div style="position:absolute;left:446px;top:716px;width:1px;height:30px;background:#dcdcdc"></div>
<div style="position:absolute;left:616px;top:716px;width:1px;height:30px;background:#dcdcdc"></div>
<div style="position:absolute;left:786px;top:716px;width:1px;height:30px;background:#dcdcdc"></div>
<div style="position:absolute;left:956px;top:716px;width:1px;height:30px;background:#dcdcdc"></div>
<div style="position:absolute;left:1126px;top:716px;width:1px;height:30px;background:#dcdcdc"></div>
<div style="position:absolute;left:1295px;top:716px;width:1px;height:30px;background:#dcdcdc"></div>
<div style="position:absolute;left:277px;top:751px;width:1119px;height:30px;background:#f7f7f7"></div>
<div style="position:absolute;left:446px;top:751px;width:1px;height:30px;background:#dcdcdc"></div>
<div style="position:absolute;left:616px;top:751px;width:1px;height:30px;background:#dcdcdc"></div>
<div style="position:absolute;left:786px;top:751px;width:1px;height:30px;background:#dcdcdc"></div>
<div style="position:absolute;left:956px;top:751px;width:1px;height:30px;background:#dcdcdc"></div>
<div style="position:absolute;left:1126px;top:751px;width:1px;height:30px;background:#dcdcdc"></div>
<div style="position:absolute;left:1295px;top:751px;width:1px;height:30px;background:#dcdcdc"></div>
<div style="position:absolute;left:277px;top:786px;width:1119px;height:30px;background:#f7f7f7"></div>
<div style="position:absolute;left:446px;top:786px;width:1px;height:30px;background:#dcdcdc"></div>
<div style="position:absolute;left:616px;top:786px;width:1px;height:30px;background:#dcdcdc"></div>
<div style="position:absolute;left:786px;top:786px;width:1px;height:30px;background:#dcdcdc"></div>
<div style="position:absolute;left:956px;top:786px;width:1px;height:30px;background:#dcdcdc"></div>
<div style="position:absolute;left:1126px;top:786px;width:1px;height:30px;background:#dcdcdc"></div>
<div style="position:absolute;left:1295px;top:786px;width:1px;height:30px;background:#dcdcdc"></div>
<div style="position:absolute;left:277px;top:821px;width:1119px;height:30px;background:#f7f7f7"></div>
<div style="position:absolute;left:446px;top:821px;width:1px;height:30px;background:#dcdcdc"></div>
<div style="position:absolute;left:616px;top:821px;width:1px;height:30px;background:#dcdcdc"></div>
<div style="position:absolute;left:786px;top:821px;width:1px;height:30px;background:#dcdcdc"></div>
<div style="position:absolute;left:956px;top:821px;width:1px;height:30px;background:#dcdcdc"></div>
<div style="position:absolute;left:1126px;top:821px;width:1px;height:30px;background:#dcdcdc"></div>
<div style="position:absolute;left:1295px;top:821px;width:1px;height:30px;background:#dcdcdc"></div>
<div style="position:absolute;left:854px;top:864.3px;width:86px;height:28px;border:1px solid #b8c3d0;border-radius:4px;background:#f9f9f9"></div>
<svg style="position:absolute;left:913.2px;top:874.3px" width="16.2" height="9.9"><path d="M2,2 L8.1,7.9 L14.2,2" fill="none" stroke="#2863c8" stroke-width="1.6"/></svg>
<div style="position:absolute;left:1097px;top:635px;width:297px;height:28px;border:1px solid #b8c3d0;border-radius:4px;background:#f9f9f9"></div>
<svg style="position:absolute;left:1375px;top:642.5px" width="15" height="15"><g fill="none" stroke="#2863c8" stroke-width="1.15"><rect x="0.9" y="2.0" width="12.2" height="12.0" rx="1.4"/><path d="M0.9,5.9 H13.1 M4.4,0.2 V4.0 M9.5,0.2 V4.0"/></g></svg>
<div style="position:absolute;left:447px;top:1012px;width:2px;height:15px;background:#dcdcdc"></div>
<div style="position:absolute;left:617px;top:1012px;width:2px;height:15px;background:#dcdcdc"></div>
<div style="position:absolute;left:787px;top:1012px;width:2px;height:15px;background:#dcdcdc"></div>
<div style="position:absolute;left:957px;top:1012px;width:2px;height:15px;background:#dcdcdc"></div>
<div style="position:absolute;left:1127px;top:1012px;width:2px;height:15px;background:#dcdcdc"></div>
<div style="position:absolute;left:1296px;top:1012px;width:2px;height:15px;background:#dcdcdc"></div>
<svg style="position:absolute;left:363.9px;top:1014.6px" width="14.2" height="8.9"><path d="M2,6.9 L7.1,2 L12.2,6.9" fill="none" stroke="#2863c8" stroke-width="1.5"/></svg>
<svg style="position:absolute;left:530.4px;top:1014.6px" width="14.2" height="8.9"><path d="M2,6.9 L7.1,2 L12.2,6.9" fill="none" stroke="#2863c8" stroke-width="1.5"/></svg>
<svg style="position:absolute;left:700.4px;top:1014.6px" width="14.2" height="8.9"><path d="M2,6.9 L7.1,2 L12.2,6.9" fill="none" stroke="#2863c8" stroke-width="1.5"/></svg>
<svg style="position:absolute;left:839.4px;top:1014.6px" width="14.2" height="8.9"><path d="M2,6.9 L7.1,2 L12.2,6.9" fill="none" stroke="#2863c8" stroke-width="1.5"/></svg>
<svg style="position:absolute;left:979.9px;top:1014.6px" width="14.2" height="8.9"><path d="M2,6.9 L7.1,2 L12.2,6.9" fill="none" stroke="#2863c8" stroke-width="1.5"/></svg>
<svg style="position:absolute;left:1149.9px;top:1014.6px" width="14.2" height="8.9"><path d="M2,6.9 L7.1,2 L12.2,6.9" fill="none" stroke="#2863c8" stroke-width="1.5"/></svg>
<svg style="position:absolute;left:1319.3000000000002px;top:1014.6px" width="14.2" height="8.9"><path d="M2,6.9 L7.1,2 L12.2,6.9" fill="none" stroke="#2863c8" stroke-width="1.5"/></svg>
<div style="position:absolute;left:277px;top:1039px;width:1119px;height:30px;background:#f7f7f7"></div>
<div style="position:absolute;left:446px;top:1039px;width:1px;height:30px;background:#dcdcdc"></div>
<div style="position:absolute;left:616px;top:1039px;width:1px;height:30px;background:#dcdcdc"></div>
<div style="position:absolute;left:786px;top:1039px;width:1px;height:30px;background:#dcdcdc"></div>
<div style="position:absolute;left:956px;top:1039px;width:1px;height:30px;background:#dcdcdc"></div>
<div style="position:absolute;left:1126px;top:1039px;width:1px;height:30px;background:#dcdcdc"></div>
<div style="position:absolute;left:1295px;top:1039px;width:1px;height:30px;background:#dcdcdc"></div>
<div style="position:absolute;left:277px;top:1074px;width:1119px;height:30px;background:#f7f7f7"></div>
<div style="position:absolute;left:446px;top:1074px;width:1px;height:30px;background:#dcdcdc"></div>
<div style="position:absolute;left:616px;top:1074px;width:1px;height:30px;background:#dcdcdc"></div>
<div style="position:absolute;left:786px;top:1074px;width:1px;height:30px;background:#dcdcdc"></div>
<div style="position:absolute;left:956px;top:1074px;width:1px;height:30px;background:#dcdcdc"></div>
<div style="position:absolute;left:1126px;top:1074px;width:1px;height:30px;background:#dcdcdc"></div>
<div style="position:absolute;left:1295px;top:1074px;width:1px;height:30px;background:#dcdcdc"></div>
<div style="position:absolute;left:277px;top:1109px;width:1119px;height:30px;background:#f7f7f7"></div>
<div style="position:absolute;left:446px;top:1109px;width:1px;height:30px;background:#dcdcdc"></div>
<div style="position:absolute;left:616px;top:1109px;width:1px;height:30px;background:#dcdcdc"></div>
<div style="position:absolute;left:786px;top:1109px;width:1px;height:30px;background:#dcdcdc"></div>
<div style="position:absolute;left:956px;top:1109px;width:1px;height:30px;background:#dcdcdc"></div>
<div style="position:absolute;left:1126px;top:1109px;width:1px;height:30px;background:#dcdcdc"></div>
<div style="position:absolute;left:1295px;top:1109px;width:1px;height:30px;background:#dcdcdc"></div>
<div style="position:absolute;left:854px;top:1152.3px;width:86px;height:28px;border:1px solid #b8c3d0;border-radius:4px;background:#f9f9f9"></div>
<svg style="position:absolute;left:913.2px;top:1162.3px" width="16.2" height="9.9"><path d="M2,2 L8.1,7.9 L14.2,2" fill="none" stroke="#2863c8" stroke-width="1.6"/></svg>
<div style="position:absolute;left:929px;top:958px;width:158px;height:28px;border:1px solid #b8c3d0;border-radius:4px;background:#f9f9f9"></div>
<svg style="position:absolute;left:1060.2px;top:968.2px" width="16.2" height="9.9"><path d="M2,2 L8.1,7.9 L14.2,2" fill="none" stroke="#2863c8" stroke-width="1.6"/></svg>
<div style="position:absolute;left:1097px;top:958px;width:297px;height:28px;border:1px solid #b8c3d0;border-radius:4px;background:#f9f9f9"></div>
<svg style="position:absolute;left:1375px;top:965.5px" width="15" height="15"><g fill="none" stroke="#2863c8" stroke-width="1.15"><rect x="0.9" y="2.0" width="12.2" height="12.0" rx="1.4"/><path d="M0.9,5.9 H13.1 M4.4,0.2 V4.0 M9.5,0.2 V4.0"/></g></svg>
<div style="position:absolute;left:1338px;top:1005px;width:58px;height:30px;overflow:hidden"><span style="position:absolute;left:2.8px;top:7.974999999999955px;font:400 14.5px/14.5px 'Liberation Sans',sans-serif;-webkit-text-stroke:0.45px #0b1f3f;color:#0b1f3f;white-space:nowrap;transform:scaleX(1.0);transform-origin:left">Avg Removal Latency</span></div>
<div class="t" id="t0" style="left:302.30px;top:18.75px;font-size:15px;line-height:15px;font-weight:400;color:#333a44;transform:scaleX(0.9590);transform-origin:left;">Cluster-1</div>
<div class="t" id="t1" style="left:527.40px;top:18.15px;font-size:15px;line-height:15px;font-weight:400;color:#0b1f3f;-webkit-text-stroke:0.45px #0b1f3f;transform:scaleX(1.0326);transform-origin:left;">Cluster Connections</div>
<div class="t" id="t2" style="left:724.50px;top:18.15px;font-size:15px;line-height:15px;font-weight:400;color:#0b1f3f;-webkit-text-stroke:0.45px #0b1f3f;">Docs</div>
<div class="t" id="t3" style="left:939.80px;top:18.35px;font-size:15px;line-height:15px;font-weight:400;color:#0b1f3f;-webkit-text-stroke:0.45px #0b1f3f;transform:scaleX(0.9933);transform-origin:left;">SQL Browser</div>
<div class="t" id="t4" style="left:1014.90px;top:5.98px;font-size:10.5px;line-height:10.5px;font-weight:400;color:#0b1f3f;-webkit-text-stroke:0.35px #0b1f3f;transform:scaleX(0.9500);transform-origin:left;">New</div>
<div class="t" id="t5" style="left:1098.00px;top:18.35px;font-size:15px;line-height:15px;font-weight:400;color:#0b1f3f;-webkit-text-stroke:0.45px #0b1f3f;transform:scaleX(0.9909);transform-origin:left;">Console</div>
<div class="t" id="t6" style="left:1221.00px;top:18.35px;font-size:15px;line-height:15px;font-weight:400;color:#0b1f3f;-webkit-text-stroke:0.45px #0b1f3f;transform:scaleX(1.0370);transform-origin:left;">Settings</div>
<div class="t" id="t7" style="left:1345.47px;top:18.35px;font-size:15px;line-height:15px;font-weight:400;color:#f26a2e;-webkit-text-stroke:0.45px #f26a2e;transform:scaleX(1.0328);transform-origin:left;">Dev Mode</div>
<div class="t" id="t8" style="left:40.30px;top:63.13px;font-size:10.2px;line-height:10.2px;font-weight:400;color:#5e6877;transform:scaleX(0.9720);transform-origin:left;">5.0-SNAPSHOT - 10/09/21 - 05:27</div>
<div class="t" id="t9" style="left:45.30px;top:92.95px;font-size:15px;line-height:15px;font-weight:400;color:#0b1f3f;-webkit-text-stroke:0.45px #0b1f3f;transform:scaleX(1.0208);transform-origin:left;">Cluster</div>
<div class="t" id="t10" style="left:45.30px;top:423.95px;font-size:15px;line-height:15px;font-weight:400;color:#0b1f3f;-webkit-text-stroke:0.45px #0b1f3f;transform:scaleX(0.9943);transform-origin:left;">Storage</div>
<div class="t" id="t11" style="left:45.30px;top:685.95px;font-size:15px;line-height:15px;font-weight:400;color:#0b1f3f;-webkit-text-stroke:0.45px #0b1f3f;transform:scaleX(1.0441);transform-origin:left;">Streaming</div>
<div class="t" id="t12" style="left:45.30px;top:721.95px;font-size:15px;line-height:15px;font-weight:400;color:#0b1f3f;-webkit-text-stroke:0.45px #0b1f3f;transform:scaleX(1.0328);transform-origin:left;">Compute</div>
<div class="t" id="t13" style="left:44.28px;top:757.95px;font-size:15px;line-height:15px;font-weight:400;color:#0b1f3f;-webkit-text-stroke:0.45px #0b1f3f;transform:scaleX(1.0239);transform-origin:left;">Messaging</div>
<div class="t" id="t14" style="left:51.38px;top:131.95px;font-size:15px;line-height:15px;font-weight:400;color:#5e6877;transform:scaleX(1.0222);transform-origin:left;">Dashboard</div>
<div class="t" id="t15" style="left:52.40px;top:166.95px;font-size:15px;line-height:15px;font-weight:400;color:#5e6877;transform:scaleX(0.9804);transform-origin:left;">Clients</div>
<div class="t" id="t16" style="left:52.40px;top:201.95px;font-size:15px;line-height:15px;font-weight:400;color:#5e6877;transform:scaleX(1.0242);transform-origin:left;">Client Filtering</div>
<div class="t" id="t17" style="left:51.36px;top:236.95px;font-size:15px;line-height:15px;font-weight:400;color:#5e6877;transform:scaleX(1.0410);transform-origin:left;">Members</div>
<div class="t" id="t18" style="left:52.40px;top:271.95px;font-size:15px;line-height:15px;font-weight:400;color:#5e6877;transform:scaleX(1.0495);transform-origin:left;">Administration</div>
<div class="t" id="t19" style="left:52.40px;top:306.95px;font-size:15px;line-height:15px;font-weight:400;color:#5e6877;transform:scaleX(0.9946);transform-origin:left;">WAN Replication</div>
<div class="t" id="t20" style="left:51.37px;top:341.95px;font-size:15px;line-height:15px;font-weight:400;color:#5e6877;transform:scaleX(1.0333);transform-origin:left;">Scripting</div>
<div class="t" id="t21" style="left:52.40px;top:376.95px;font-size:15px;line-height:15px;font-weight:400;color:#5e6877;transform:scaleX(0.9985);transform-origin:left;">Config Healthcheck</div>
<div class="t" id="t22" style="left:51.41px;top:463.25px;font-size:15px;line-height:15px;font-weight:400;color:#5e6877;transform:scaleX(0.9889);transform-origin:left;">Maps</div>
<div class="t" id="t23" style="left:51.37px;top:498.25px;font-size:15px;line-height:15px;font-weight:400;color:#2a62c6;-webkit-text-stroke:0.45px #2a62c6;transform:scaleX(1.0288);transform-origin:left;">Replicated Maps</div>
<div class="t" id="t24" style="left:52.40px;top:533.25px;font-size:15px;line-height:15px;font-weight:400;color:#5e6877;transform:scaleX(0.9255);transform-origin:left;">Caches</div>
<div class="t" id="t25" style="left:51.35px;top:568.25px;font-size:15px;line-height:15px;font-weight:400;color:#5e6877;transform:scaleX(1.0522);transform-origin:left;">MultiMaps</div>
<div class="t" id="t26" style="left:51.41px;top:603.25px;font-size:15px;line-height:15px;font-weight:400;color:#5e6877;transform:scaleX(0.9894);transform-origin:left;">PN Counters</div>
<div class="t" id="t27" style="left:51.41px;top:638.25px;font-size:15px;line-height:15px;font-weight:400;color:#5e6877;transform:scaleX(0.9896);transform-origin:left;">Flake ID Generators</div>
<div class="t" id="t28" style="left:215.50px;top:168.94px;font-size:12.3px;line-height:12.3px;font-weight:400;color:#0b1f3f;-webkit-text-stroke:0.55px #0b1f3f;transform:translateX(-50%) scaleX(0.9286);transform-origin:center;">4</div>
<div class="t" id="t29" style="left:215.50px;top:238.94px;font-size:12.3px;line-height:12.3px;font-weight:400;color:#0b1f3f;-webkit-text-stroke:0.55px #0b1f3f;transform:translateX(-50%) scaleX(0.9286);transform-origin:center;">4</div>
<div class="t" id="t30" style="left:215.50px;top:308.94px;font-size:12.3px;line-height:12.3px;font-weight:400;color:#0b1f3f;-webkit-text-stroke:0.55px #0b1f3f;transform:translateX(-50%) scaleX(0.7143);transform-origin:center;">1</div>
<div class="t" id="t31" style="left:206.50px;top:464.94px;font-size:12.3px;line-height:12.3px;font-weight:400;color:#0b1f3f;-webkit-text-stroke:0.55px #0b1f3f;transform:translateX(-50%) scaleX(1.0542);transform-origin:center;">9/12</div>
<div class="t" id="t32" style="left:210.00px;top:499.94px;font-size:12.3px;line-height:12.3px;font-weight:400;color:#0b1f3f;-webkit-text-stroke:0.55px #0b1f3f;transform:translateX(-50%) scaleX(1.0294);transform-origin:center;">1/2</div>
<div class="t" id="t33" style="left:215.50px;top:534.94px;font-size:12.3px;line-height:12.3px;font-weight:400;color:#0b1f3f;-webkit-text-stroke:0.55px #0b1f3f;transform:translateX(-50%) scaleX(0.7143);transform-origin:center;">1</div>
<div class="t" id="t34" style="left:215.50px;top:569.94px;font-size:12.3px;line-height:12.3px;font-weight:400;color:#0b1f3f;-webkit-text-stroke:0.55px #0b1f3f;transform:translateX(-50%) scaleX(0.7143);transform-origin:center;">1</div>
<div class="t" id="t35" style="left:215.50px;top:604.94px;font-size:12.3px;line-height:12.3px;font-weight:400;color:#0b1f3f;-webkit-text-stroke:0.55px #0b1f3f;transform:translateX(-50%) scaleX(0.7143);transform-origin:center;">1</div>
<div class="t" id="t36" style="left:210.00px;top:639.94px;font-size:12.3px;line-height:12.3px;font-weight:400;color:#0b1f3f;-webkit-text-stroke:0.55px #0b1f3f;transform:translateX(-50%) scaleX(1.0294);transform-origin:center;">1/1</div>
<div class="t" id="t37" style="left:278.20px;top:94.97px;font-size:16.5px;line-height:16.5px;font-weight:400;color:#0b1f3f;-webkit-text-stroke:0.7px #0b1f3f;transform:scaleX(1.0202);transform-origin:left;">replicated-map-1</div>
<div class="t" id="t38" style="left:292.70px;top:187.95px;font-size:15px;line-height:15px;font-weight:400;color:#333a44;transform:scaleX(1.0058);transform-origin:left;">Total Entries and Memory (...</div>
<div class="t" id="t39" style="left:882.50px;top:187.95px;font-size:15px;line-height:15px;font-weight:400;color:#333a44;transform:scaleX(1.0267);transform-origin:left;">Operations/s (Outliers)</div>
<div class="t" id="t40" style="left:292.09px;top:544.25px;font-size:15px;line-height:15px;font-weight:400;color:#5e6877;transform:scaleX(0.9138);transform-origin:left;">Now</div>
<div class="t" id="t41" style="left:882.09px;top:544.25px;font-size:15px;line-height:15px;font-weight:400;color:#5e6877;transform:scaleX(0.9138);transform-origin:left;">Now</div>
<div class="t" id="t42" style="left:713.50px;top:543.35px;font-size:15px;line-height:15px;font-weight:400;color:#2a62c6;transform:scaleX(0.9954);transform-origin:left;">Configure</div>
<div class="t" id="t43" style="left:1301.80px;top:543.35px;font-size:15px;line-height:15px;font-weight:400;color:#2a62c6;transform:scaleX(1.0077);transform-origin:left;">Configure</div>
<div class="t" id="t44" style="right:1112.10px;top:243.00px;font-size:12px;line-height:12px;font-weight:400;color:#595959;transform:scaleX(1.0750);transform-origin:right;">29000</div>
<div class="t" id="t45" style="right:1112.10px;top:271.26px;font-size:12px;line-height:12px;font-weight:400;color:#595959;transform:scaleX(1.0750);transform-origin:right;">28500</div>
<div class="t" id="t46" style="right:1112.10px;top:299.52px;font-size:12px;line-height:12px;font-weight:400;color:#595959;transform:scaleX(1.0750);transform-origin:right;">28000</div>
<div class="t" id="t47" style="right:1112.10px;top:327.78px;font-size:12px;line-height:12px;font-weight:400;color:#595959;transform:scaleX(1.0750);transform-origin:right;">27500</div>
<div class="t" id="t48" style="right:1112.10px;top:356.04px;font-size:12px;line-height:12px;font-weight:400;color:#595959;transform:scaleX(1.0750);transform-origin:right;">27000</div>
<div class="t" id="t49" style="right:1112.10px;top:384.30px;font-size:12px;line-height:12px;font-weight:400;color:#595959;transform:scaleX(1.0750);transform-origin:right;">26500</div>
<div class="t" id="t50" style="right:1112.10px;top:412.56px;font-size:12px;line-height:12px;font-weight:400;color:#595959;transform:scaleX(1.0750);transform-origin:right;">26000</div>
<div class="t" id="t51" style="right:1112.10px;top:440.82px;font-size:12px;line-height:12px;font-weight:400;color:#595959;transform:scaleX(1.0750);transform-origin:right;">25500</div>
<div class="t" id="t52" style="right:1112.10px;top:469.08px;font-size:12px;line-height:12px;font-weight:400;color:#595959;transform:scaleX(1.0750);transform-origin:right;">25000</div>
<div class="t" id="t53" style="left:752.12px;top:242.90px;font-size:12px;line-height:12px;font-weight:400;color:#595959;transform:scaleX(1.0750);transform-origin:left;">1.34 MB</div>
<div class="t" id="t54" style="left:752.12px;top:265.48px;font-size:12px;line-height:12px;font-weight:400;color:#595959;transform:scaleX(1.0750);transform-origin:left;">1.32 MB</div>
<div class="t" id="t55" style="left:752.12px;top:288.06px;font-size:12px;line-height:12px;font-weight:400;color:#595959;transform:scaleX(1.0750);transform-origin:left;">1.30 MB</div>
<div class="t" id="t56" style="left:752.12px;top:310.64px;font-size:12px;line-height:12px;font-weight:400;color:#595959;transform:scaleX(1.0750);transform-origin:left;">1.28 MB</div>
<div class="t" id="t57" style="left:752.12px;top:333.22px;font-size:12px;line-height:12px;font-weight:400;color:#595959;transform:scaleX(1.0750);transform-origin:left;">1.26 MB</div>
<div class="t" id="t58" style="left:752.12px;top:355.80px;font-size:12px;line-height:12px;font-weight:400;color:#595959;transform:scaleX(1.0750);transform-origin:left;">1.24 MB</div>
<div class="t" id="t59" style="left:752.12px;top:378.38px;font-size:12px;line-height:12px;font-weight:400;color:#595959;transform:scaleX(1.0750);transform-origin:left;">1.22 MB</div>
<div class="t" id="t60" style="left:752.12px;top:400.96px;font-size:12px;line-height:12px;font-weight:400;color:#595959;transform:scaleX(1.0750);transform-origin:left;">1.20 MB</div>
<div class="t" id="t61" style="left:752.12px;top:423.54px;font-size:12px;line-height:12px;font-weight:400;color:#595959;transform:scaleX(1.0750);transform-origin:left;">1.18 MB</div>
<div class="t" id="t62" style="left:752.12px;top:446.12px;font-size:12px;line-height:12px;font-weight:400;color:#595959;transform:scaleX(1.0750);transform-origin:left;">1.16 MB</div>
<div class="t" id="t63" style="left:752.12px;top:468.70px;font-size:12px;line-height:12px;font-weight:400;color:#595959;transform:scaleX(1.0750);transform-origin:left;">1.14 MB</div>
<div class="t" id="t64" style="left:328.20px;top:486.40px;font-size:12px;line-height:12px;font-weight:400;color:#595959;transform:translateX(-50%) scaleX(1.0850);transform-origin:center;">5:22:39 pm</div>
<div class="t" id="t65" style="left:410.94px;top:486.40px;font-size:12px;line-height:12px;font-weight:400;color:#595959;transform:translateX(-50%) scaleX(1.0850);transform-origin:center;">5:23:39 pm</div>
<div class="t" id="t66" style="left:493.68px;top:486.40px;font-size:12px;line-height:12px;font-weight:400;color:#595959;transform:translateX(-50%) scaleX(1.0850);transform-origin:center;">5:24:39 pm</div>
<div class="t" id="t67" style="left:576.42px;top:486.40px;font-size:12px;line-height:12px;font-weight:400;color:#595959;transform:translateX(-50%) scaleX(1.0850);transform-origin:center;">5:25:39 pm</div>
<div class="t" id="t68" style="left:659.16px;top:486.40px;font-size:12px;line-height:12px;font-weight:400;color:#595959;transform:translateX(-50%) scaleX(1.0850);transform-origin:center;">5:26:39 pm</div>
<div class="t" id="t69" style="left:741.90px;top:486.40px;font-size:12px;line-height:12px;font-weight:400;color:#595959;transform:translateX(-50%) scaleX(1.0850);transform-origin:center;">5:27:39 pm</div>
<div class="t" id="t70" style="right:522.10px;top:243.00px;font-size:12px;line-height:12px;font-weight:400;color:#595959;transform:scaleX(1.0750);transform-origin:right;">12000</div>
<div class="t" id="t71" style="right:522.10px;top:280.70px;font-size:12px;line-height:12px;font-weight:400;color:#595959;transform:scaleX(1.0750);transform-origin:right;">10000</div>
<div class="t" id="t72" style="right:522.82px;top:318.40px;font-size:12px;line-height:12px;font-weight:400;color:#595959;transform:scaleX(1.0750);transform-origin:right;">8000</div>
<div class="t" id="t73" style="right:522.82px;top:356.10px;font-size:12px;line-height:12px;font-weight:400;color:#595959;transform:scaleX(1.0750);transform-origin:right;">6000</div>
<div class="t" id="t74" style="right:522.82px;top:393.80px;font-size:12px;line-height:12px;font-weight:400;color:#595959;transform:scaleX(1.0750);transform-origin:right;">4000</div>
<div class="t" id="t75" style="right:522.82px;top:431.50px;font-size:12px;line-height:12px;font-weight:400;color:#595959;transform:scaleX(1.0750);transform-origin:right;">2000</div>
<div class="t" id="t76" style="right:522.84px;top:469.20px;font-size:12px;line-height:12px;font-weight:400;color:#595959;transform:scaleX(1.0750);transform-origin:right;">0</div>
<div class="t" id="t77" style="left:918.20px;top:486.40px;font-size:12px;line-height:12px;font-weight:400;color:#595959;transform:translateX(-50%) scaleX(1.0850);transform-origin:center;">5:22:39 pm</div>
<div class="t" id="t78" style="left:1006.58px;top:486.40px;font-size:12px;line-height:12px;font-weight:400;color:#595959;transform:translateX(-50%) scaleX(1.0850);transform-origin:center;">5:23:39 pm</div>
<div class="t" id="t79" style="left:1094.96px;top:486.40px;font-size:12px;line-height:12px;font-weight:400;color:#595959;transform:translateX(-50%) scaleX(1.0850);transform-origin:center;">5:24:39 pm</div>
<div class="t" id="t80" style="left:1183.34px;top:486.40px;font-size:12px;line-height:12px;font-weight:400;color:#595959;transform:translateX(-50%) scaleX(1.0850);transform-origin:center;">5:25:39 pm</div>
<div class="t" id="t81" style="left:1271.72px;top:486.40px;font-size:12px;line-height:12px;font-weight:400;color:#595959;transform:translateX(-50%) scaleX(1.0850);transform-origin:center;">5:26:39 pm</div>
<div class="t" id="t82" style="left:1360.10px;top:486.40px;font-size:12px;line-height:12px;font-weight:400;color:#595959;transform:translateX(-50%) scaleX(1.0850);transform-origin:center;">5:27:39 pm</div>
<div class="t" id="t83" style="left:276.97px;top:640.18px;font-size:16.5px;line-height:16.5px;font-weight:400;color:#0b1f3f;-webkit-text-stroke:0.6px #0b1f3f;transform:scaleX(1.0304);transform-origin:left;">Replicated Map Statistics</div>
<div class="t" id="t84" style="left:296.72px;top:689.97px;font-size:14.5px;line-height:14.5px;font-weight:400;color:#0b1f3f;-webkit-text-stroke:0.45px #0b1f3f;transform:scaleX(1.0774);transform-origin:left;">Member</div>
<div class="t" id="t85" style="left:547.51px;top:689.97px;font-size:14.5px;line-height:14.5px;font-weight:400;color:#0b1f3f;-webkit-text-stroke:0.45px #0b1f3f;transform:scaleX(1.0864);transform-origin:left;">Entries</div>
<div class="t" id="t86" style="left:735.80px;top:689.97px;font-size:14.5px;line-height:14.5px;font-weight:400;color:#0b1f3f;-webkit-text-stroke:0.45px #0b1f3f;transform:scaleX(0.9806);transform-origin:left;">Gets</div>
<div class="t" id="t87" style="left:904.91px;top:689.97px;font-size:14.5px;line-height:14.5px;font-weight:400;color:#0b1f3f;-webkit-text-stroke:0.45px #0b1f3f;transform:scaleX(1.0893);transform-origin:left;">Puts</div>
<div class="t" id="t88" style="left:1038.96px;top:689.97px;font-size:14.5px;line-height:14.5px;font-weight:400;color:#0b1f3f;-webkit-text-stroke:0.45px #0b1f3f;transform:scaleX(1.0406);transform-origin:left;">Removals</div>
<div class="t" id="t89" style="left:1176.51px;top:689.97px;font-size:14.5px;line-height:14.5px;font-weight:400;color:#0b1f3f;-webkit-text-stroke:0.45px #0b1f3f;transform:scaleX(1.0878);transform-origin:left;">Entry Memory</div>
<div class="t" id="t90" style="left:296.80px;top:724.67px;font-size:14.5px;line-height:14.5px;font-weight:400;color:#0b1f3f;">127.0.0.1:5701</div>
<div class="t" id="t91" style="right:835.33px;top:724.67px;font-size:14.5px;line-height:14.5px;font-weight:400;color:#0b1f3f;transform:scaleX(1.0312);transform-origin:right;">9609</div>
<div class="t" id="t92" style="right:665.40px;top:724.67px;font-size:14.5px;line-height:14.5px;font-weight:400;color:#0b1f3f;">915</div>
<div class="t" id="t93" style="right:495.25px;top:724.67px;font-size:14.5px;line-height:14.5px;font-weight:400;color:#0b1f3f;transform:scaleX(1.0769);transform-origin:right;">10065</div>
<div class="t" id="t94" style="right:325.39px;top:724.67px;font-size:14.5px;line-height:14.5px;font-weight:400;color:#0b1f3f;transform:scaleX(1.0417);transform-origin:right;">456</div>
<div class="t" id="t95" style="right:156.29px;top:724.67px;font-size:14.5px;line-height:14.5px;font-weight:400;color:#0b1f3f;transform:scaleX(1.0062);transform-origin:right;">450.42 kB</div>
<div class="t" id="t96" style="left:296.79px;top:759.67px;font-size:14.5px;line-height:14.5px;font-weight:400;color:#0b1f3f;transform:scaleX(1.0105);transform-origin:left;">127.0.0.1:5702</div>
<div class="t" id="t97" style="right:835.33px;top:759.67px;font-size:14.5px;line-height:14.5px;font-weight:400;color:#0b1f3f;transform:scaleX(1.0312);transform-origin:right;">9609</div>
<div class="t" id="t98" style="right:665.40px;top:759.67px;font-size:14.5px;line-height:14.5px;font-weight:400;color:#0b1f3f;">915</div>
<div class="t" id="t99" style="right:495.25px;top:759.67px;font-size:14.5px;line-height:14.5px;font-weight:400;color:#0b1f3f;transform:scaleX(1.0769);transform-origin:right;">10065</div>
<div class="t" id="t100" style="right:325.39px;top:759.67px;font-size:14.5px;line-height:14.5px;font-weight:400;color:#0b1f3f;transform:scaleX(1.0417);transform-origin:right;">456</div>
<div class="t" id="t101" style="right:156.29px;top:759.67px;font-size:14.5px;line-height:14.5px;font-weight:400;color:#0b1f3f;transform:scaleX(1.0062);transform-origin:right;">450.42 kB</div>
<div class="t" id="t102" style="left:296.80px;top:794.67px;font-size:14.5px;line-height:14.5px;font-weight:400;color:#0b1f3f;">127.0.0.1:5704</div>
<div class="t" id="t103" style="right:835.33px;top:794.67px;font-size:14.5px;line-height:14.5px;font-weight:400;color:#0b1f3f;transform:scaleX(1.0312);transform-origin:right;">9609</div>
<div class="t" id="t104" style="right:665.52px;top:794.67px;font-size:14.5px;line-height:14.5px;font-weight:400;color:#0b1f3f;transform:scaleX(1.0625);transform-origin:right;">0</div>
<div class="t" id="t105" style="right:495.25px;top:794.67px;font-size:14.5px;line-height:14.5px;font-weight:400;color:#0b1f3f;transform:scaleX(1.0769);transform-origin:right;">10065</div>
<div class="t" id="t106" style="right:325.39px;top:794.67px;font-size:14.5px;line-height:14.5px;font-weight:400;color:#0b1f3f;transform:scaleX(1.0417);transform-origin:right;">456</div>
<div class="t" id="t107" style="right:156.29px;top:794.67px;font-size:14.5px;line-height:14.5px;font-weight:400;color:#0b1f3f;transform:scaleX(1.0062);transform-origin:right;">450.42 kB</div>
<div class="t" id="t108" style="left:297.80px;top:829.67px;font-size:14.5px;line-height:14.5px;font-weight:400;color:#0b1f3f;transform:scaleX(0.9556);transform-origin:left;">TOTAL</div>
<div class="t" id="t109" style="right:835.26px;top:829.67px;font-size:14.5px;line-height:14.5px;font-weight:400;color:#0b1f3f;transform:scaleX(1.0375);transform-origin:right;">28827</div>
<div class="t" id="t110" style="right:665.32px;top:829.67px;font-size:14.5px;line-height:14.5px;font-weight:400;color:#0b1f3f;transform:scaleX(1.0645);transform-origin:right;">1830</div>
<div class="t" id="t111" style="right:495.26px;top:829.67px;font-size:14.5px;line-height:14.5px;font-weight:400;color:#0b1f3f;transform:scaleX(1.0500);transform-origin:right;">30195</div>
<div class="t" id="t112" style="right:325.32px;top:829.67px;font-size:14.5px;line-height:14.5px;font-weight:400;color:#0b1f3f;transform:scaleX(1.0645);transform-origin:right;">1368</div>
<div class="t" id="t113" style="right:156.60px;top:829.67px;font-size:14.5px;line-height:14.5px;font-weight:400;color:#0b1f3f;transform:scaleX(1.0283);transform-origin:right;">1.32 MB</div>
<div class="t" id="t114" style="left:731.59px;top:872.87px;font-size:14.5px;line-height:14.5px;font-weight:400;color:#5e6877;transform:scaleX(1.0085);transform-origin:left;">1 – 3 of 3</div>
<div class="t" id="t115" style="left:810.42px;top:870.57px;font-size:14.5px;line-height:14.5px;font-weight:400;color:#5e6877;transform:scaleX(0.9829);transform-origin:left;">Rows</div>
<div class="t" id="t116" style="left:869.37px;top:872.15px;font-size:15px;line-height:15px;font-weight:400;color:#333a44;transform:scaleX(1.0333);transform-origin:left;">10</div>
<div class="t" id="t117" style="left:1108.09px;top:642.25px;font-size:15px;line-height:15px;font-weight:400;color:#5e6877;transform:scaleX(0.9138);transform-origin:left;">Now</div>
<div class="t" id="t118" style="left:276.96px;top:963.18px;font-size:16.5px;line-height:16.5px;font-weight:400;color:#0b1f3f;-webkit-text-stroke:0.6px #0b1f3f;transform:scaleX(1.0374);transform-origin:left;">Replicated Map Throughput Statistics</div>
<div class="t" id="t119" style="left:296.72px;top:1012.97px;font-size:14.5px;line-height:14.5px;font-weight:400;color:#0b1f3f;-webkit-text-stroke:0.45px #0b1f3f;transform:scaleX(1.0774);transform-origin:left;">Member</div>
<div class="t" id="t120" style="left:551.87px;top:1012.97px;font-size:14.5px;line-height:14.5px;font-weight:400;color:#0b1f3f;-webkit-text-stroke:0.45px #0b1f3f;transform:scaleX(1.1282);transform-origin:left;">Puts/s</div>
<div class="t" id="t121" style="left:723.00px;top:1012.97px;font-size:14.5px;line-height:14.5px;font-weight:400;color:#0b1f3f;-webkit-text-stroke:0.45px #0b1f3f;transform:scaleX(1.0476);transform-origin:left;">Gets/s</div>
<div class="t" id="t122" style="left:860.96px;top:1012.97px;font-size:14.5px;line-height:14.5px;font-weight:400;color:#0b1f3f;-webkit-text-stroke:0.45px #0b1f3f;transform:scaleX(1.0417);transform-origin:left;">Removes/s</div>
<div class="t" id="t123" style="left:1001.90px;top:1012.97px;font-size:14.5px;line-height:14.5px;font-weight:400;color:#0b1f3f;-webkit-text-stroke:0.45px #0b1f3f;transform:scaleX(1.0436);transform-origin:left;">Avg Put Late...</div>
<div class="t" id="t124" style="left:1172.00px;top:1012.97px;font-size:14.5px;line-height:14.5px;font-weight:400;color:#0b1f3f;-webkit-text-stroke:0.45px #0b1f3f;transform:scaleX(1.0156);transform-origin:left;">Avg Get Late...</div>
<div class="t" id="t125" style="left:296.80px;top:1047.67px;font-size:14.5px;line-height:14.5px;font-weight:400;color:#0b1f3f;">127.0.0.1:5701</div>
<div class="t" id="t126" style="right:835.53px;top:1047.67px;font-size:14.5px;line-height:14.5px;font-weight:400;color:#0b1f3f;transform:scaleX(1.0714);transform-origin:right;">11</div>
<div class="t" id="t127" style="right:665.53px;top:1047.67px;font-size:14.5px;line-height:14.5px;font-weight:400;color:#0b1f3f;transform:scaleX(0.8571);transform-origin:right;">1</div>
<div class="t" id="t128" style="right:495.37px;top:1047.67px;font-size:14.5px;line-height:14.5px;font-weight:400;color:#0b1f3f;">0.51</div>
<div class="t" id="t129" style="right:325.19px;top:1047.67px;font-size:14.5px;line-height:14.5px;font-weight:400;color:#0b1f3f;transform:scaleX(1.0185);transform-origin:right;">0ms</div>
<div class="t" id="t130" style="right:156.01px;top:1047.67px;font-size:14.5px;line-height:14.5px;font-weight:400;color:#0b1f3f;transform:scaleX(1.0426);transform-origin:right;">0.01ms</div>
<div class="t" id="t131" style="left:296.79px;top:1082.67px;font-size:14.5px;line-height:14.5px;font-weight:400;color:#0b1f3f;transform:scaleX(1.0105);transform-origin:left;">127.0.0.1:5702</div>
<div class="t" id="t132" style="right:835.53px;top:1082.67px;font-size:14.5px;line-height:14.5px;font-weight:400;color:#0b1f3f;transform:scaleX(1.0714);transform-origin:right;">11</div>
<div class="t" id="t133" style="right:665.53px;top:1082.67px;font-size:14.5px;line-height:14.5px;font-weight:400;color:#0b1f3f;transform:scaleX(0.8571);transform-origin:right;">1</div>
<div class="t" id="t134" style="right:495.37px;top:1082.67px;font-size:14.5px;line-height:14.5px;font-weight:400;color:#0b1f3f;">0.51</div>
<div class="t" id="t135" style="right:325.19px;top:1082.67px;font-size:14.5px;line-height:14.5px;font-weight:400;color:#0b1f3f;transform:scaleX(1.0185);transform-origin:right;">0ms</div>
<div class="t" id="t136" style="right:156.19px;top:1082.67px;font-size:14.5px;line-height:14.5px;font-weight:400;color:#0b1f3f;transform:scaleX(1.0185);transform-origin:right;">0ms</div>
<div class="t" id="t137" style="left:296.80px;top:1117.67px;font-size:14.5px;line-height:14.5px;font-weight:400;color:#0b1f3f;">127.0.0.1:5704</div>
<div class="t" id="t138" style="right:835.53px;top:1117.67px;font-size:14.5px;line-height:14.5px;font-weight:400;color:#0b1f3f;transform:scaleX(1.0714);transform-origin:right;">11</div>
<div class="t" id="t139" style="right:665.52px;top:1117.67px;font-size:14.5px;line-height:14.5px;font-weight:400;color:#0b1f3f;transform:scaleX(1.0625);transform-origin:right;">0</div>
<div class="t" id="t140" style="right:495.37px;top:1117.67px;font-size:14.5px;line-height:14.5px;font-weight:400;color:#0b1f3f;">0.51</div>
<div class="t" id="t141" style="right:325.19px;top:1117.67px;font-size:14.5px;line-height:14.5px;font-weight:400;color:#0b1f3f;transform:scaleX(1.0185);transform-origin:right;">0ms</div>
<div class="t" id="t142" style="right:156.19px;top:1117.67px;font-size:14.5px;line-height:14.5px;font-weight:400;color:#0b1f3f;transform:scaleX(1.0185);transform-origin:right;">0ms</div>
<div class="t" id="t143" style="left:731.59px;top:1160.88px;font-size:14.5px;line-height:14.5px;font-weight:400;color:#5e6877;transform:scaleX(1.0085);transform-origin:left;">1 – 3 of 3</div>
<div class="t" id="t144" style="left:810.42px;top:1158.57px;font-size:14.5px;line-height:14.5px;font-weight:400;color:#5e6877;transform:scaleX(0.9829);transform-origin:left;">Rows</div>
<div class="t" id="t145" style="left:869.37px;top:1160.15px;font-size:15px;line-height:15px;font-weight:400;color:#333a44;transform:scaleX(1.0333);transform-origin:left;">10</div>
<div class="t" id="t146" style="left:943.27px;top:966.25px;font-size:15px;line-height:15px;font-weight:400;color:#333a44;transform:scaleX(1.0329);transform-origin:left;">Last Minute</div>
<div class="t" id="t147" style="left:1108.09px;top:965.25px;font-size:15px;line-height:15px;font-weight:400;color:#5e6877;transform:scaleX(0.9138);transform-origin:left;">Now</div>
</body></html>
